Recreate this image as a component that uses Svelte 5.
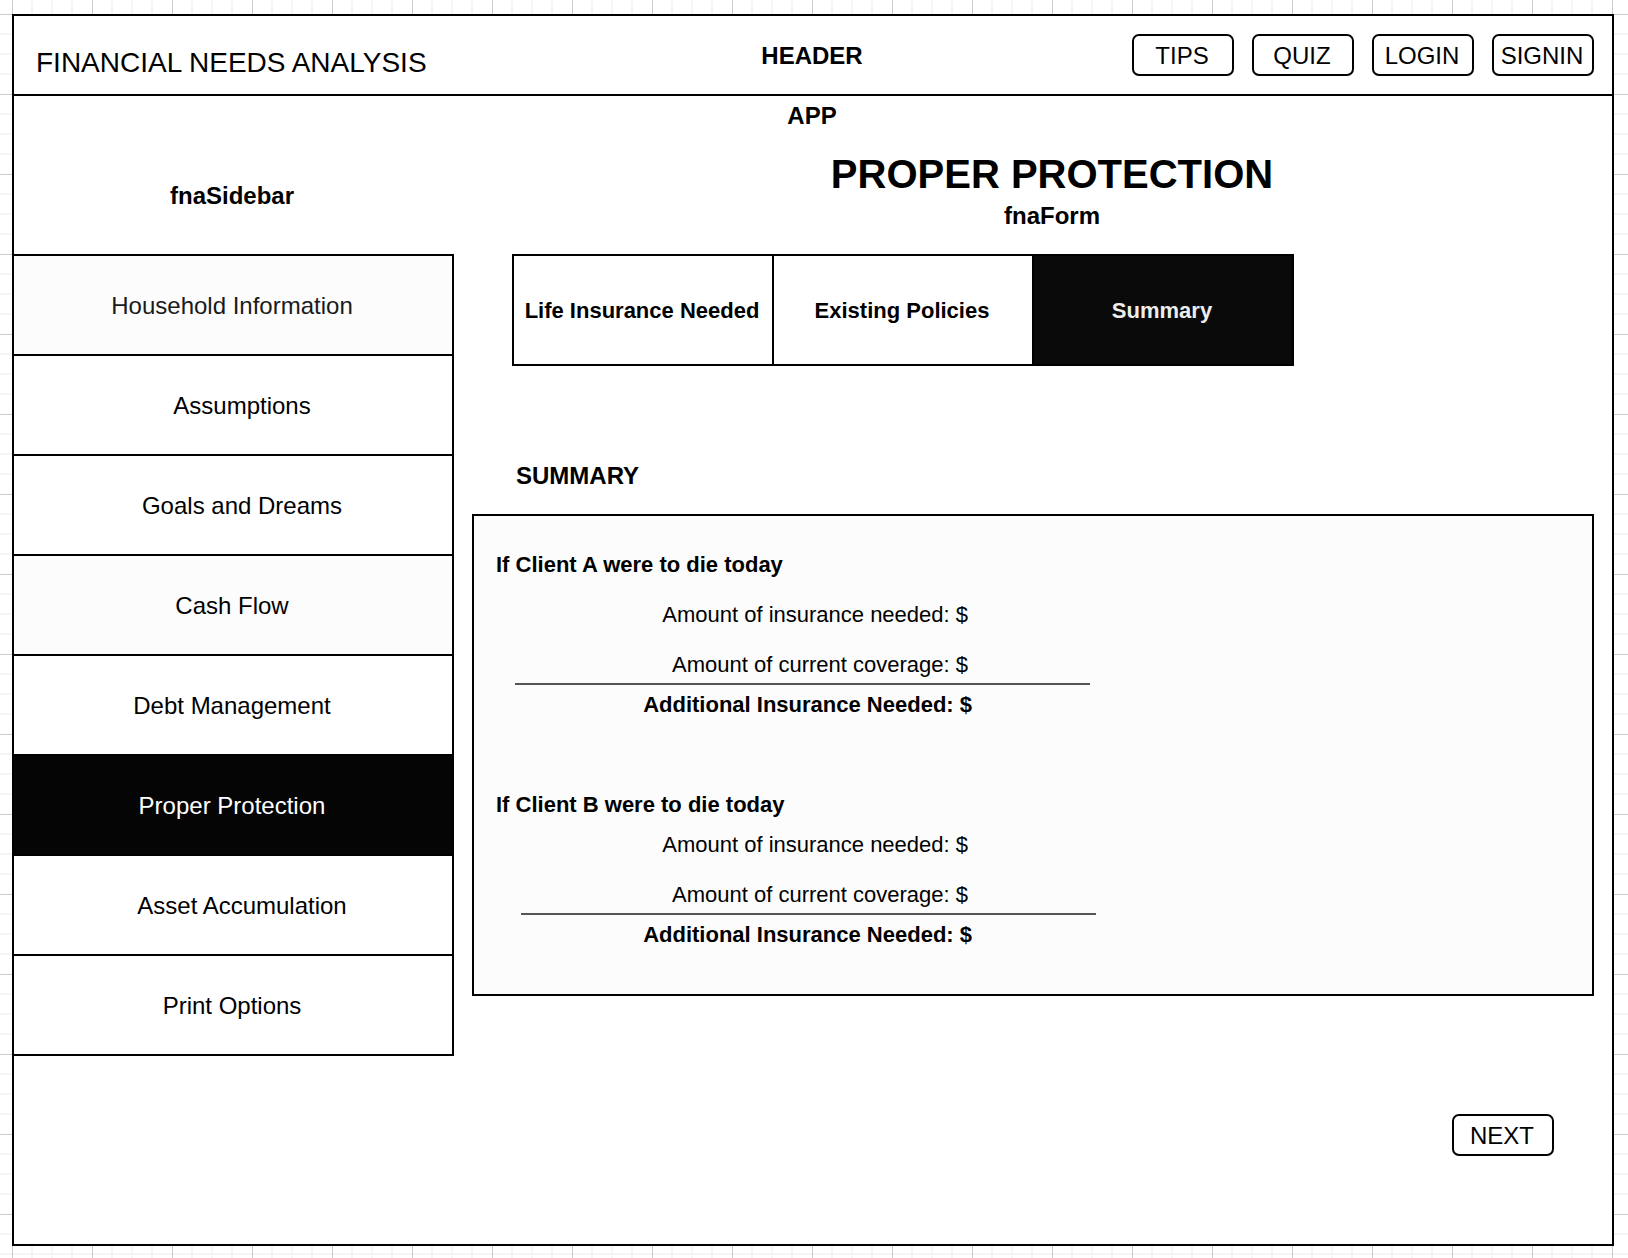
<script>
  const actions = ['TIPS', 'QUIZ', 'LOGIN', 'SIGNIN'];

  const steps = [
    { name: 'Household Information', shaded: true, muted: true },
    { name: 'Assumptions', indented: true },
    { name: 'Goals and Dreams', indented: true },
    { name: 'Cash Flow', shaded: true },
    { name: 'Debt Management' },
    { name: 'Proper Protection', current: true },
    { name: 'Asset Accumulation', indented: true },
    { name: 'Print Options' }
  ];

  const tabs = ['Life Insurance Needed', 'Existing Policies', 'Summary'];
  let activeTab = $state('Summary');

  const clients = ['A', 'B'];
</script>

<div class="canvas">
  <div class="app">
    <header>
      <h1>FINANCIAL NEEDS ANALYSIS</h1>
      <strong>HEADER</strong>
      <div class="actions">
        {#each actions as action}
          <button class="pill" type="button">{action}</button>
        {/each}
      </div>
    </header>

    <p class="app-label">APP</p>

    <div class="columns">
      <aside>
        <p class="sidebar-label">fnaSidebar</p>
        <nav aria-label="Sections">
          {#each steps as step}
            <a
              href="#step"
              class:shaded={step.shaded}
              class:muted={step.muted}
              class:indented={step.indented}
              class:current={step.current}
              aria-current={step.current ? 'page' : undefined}>{step.name}</a
            >
          {/each}
        </nav>
      </aside>

      <main>
        <div class="heading">
          <h2>PROPER PROTECTION</h2>
          <p>fnaForm</p>
        </div>

        <div class="tabs" role="tablist">
          {#each tabs as tab}
            <button
              type="button"
              role="tab"
              aria-selected={activeTab === tab}
              class:active={activeTab === tab}
              onclick={() => (activeTab = tab)}>{tab}</button
            >
          {/each}
        </div>

        <h3>SUMMARY</h3>

        <div class="panel">
          {#each clients as client}
            <section class="client">
              <h4>If Client {client} were to die today</h4>
              <p class="amount">Amount of insurance needed: $</p>
              <p class="amount coverage">Amount of current coverage: $</p>
              <hr />
              <p class="amount total">Additional Insurance Needed: $</p>
            </section>
          {/each}
        </div>

        <div class="footer">
          <button class="pill" type="button">NEXT</button>
        </div>
      </main>
    </div>
  </div>
</div>

<style>
  :global(body) {
    margin: 0;
    background: #fff;
  }

  .canvas {
    box-sizing: border-box;
    min-height: 100vh;
    padding: 14px 14px 12px 12px;
    font-family: Helvetica, 'Liberation Sans', Arial, sans-serif;
    font-size: 24px;
    line-height: 28px;
    color: #000;
    background-color: #fff;
    background-image:
      linear-gradient(to right, #ccc 1px, transparent 1px),
      linear-gradient(to bottom, #ccc 1px, transparent 1px),
      linear-gradient(
        to right,
        transparent 19px, #f5f5f5 19px 21px,
        transparent 21px 39px, #f5f5f5 39px 41px,
        transparent 41px 59px, #f5f5f5 59px 61px,
        transparent 61px
      ),
      linear-gradient(
        to bottom,
        transparent 19px, #f5f5f5 19px 21px,
        transparent 21px 39px, #f5f5f5 39px 41px,
        transparent 41px 59px, #f5f5f5 59px 61px,
        transparent 61px
      );
    background-size: 80px 80px;
    background-position: 12px 14px;
  }

  h1,
  h2,
  h3,
  h4,
  p {
    margin: 0;
  }

  button {
    font: inherit;
    color: inherit;
    background: #fff;
    cursor: pointer;
  }

  .app {
    border: 2px solid #000;
    background: #fff;
  }

  header {
    display: grid;
    grid-template-columns: 1fr auto 1fr;
    align-items: center;
    height: 78px;
    padding: 0 18px;
    border-bottom: 2px solid #000;
  }

  h1 {
    padding: 16px 0 0 4px;
    font-size: 28px;
    font-weight: 400;
  }

  header strong {
    padding: 2px 2px 0 0;
  }

  .actions {
    display: flex;
    justify-content: flex-end;
    gap: 18px;
  }

  .pill {
    width: 102px;
    height: 42px;
    padding: 2px 2px 0 0;
    border: 2px solid #000;
    border-radius: 7px;
  }

  .app-label {
    padding-right: 2px;
    line-height: 40px;
    font-weight: 700;
    text-align: center;
  }

  .columns {
    display: flex;
    align-items: flex-start;
  }

  aside {
    flex: 0 0 440px;
  }

  .sidebar-label {
    padding: 46px 4px 44px 0;
    font-weight: 700;
    text-align: center;
  }

  nav {
    border: solid #000;
    border-width: 2px 2px 0 0;
  }

  nav a {
    display: flex;
    align-items: center;
    justify-content: center;
    height: 96px;
    padding: 2px 2px 0 0;
    border-bottom: 2px solid #000;
    color: #000;
    text-decoration: none;
  }

  nav a.shaded {
    background: #fcfcfc;
  }

  nav a.muted {
    color: #1a1a1a;
  }

  nav a.indented {
    padding: 2px 0 0 18px;
  }

  nav a.current {
    background: #050505;
    color: #fff;
  }

  main {
    flex: 1;
    min-width: 0;
    padding: 14px 18px 88px;
  }

  .heading {
    margin: 0 -18px 20px 20px;
    font-weight: 700;
    text-align: center;
  }

  h2 {
    font-size: 40px;
    line-height: 48px;
  }

  .heading p {
    line-height: 36px;
  }

  .tabs {
    display: grid;
    grid-template-columns: repeat(3, 260px);
    width: max-content;
    margin-left: 40px;
    border-left: 2px solid #000;
  }

  .tabs button {
    height: 112px;
    padding: 2px 2px 0 0;
    border: solid #000;
    border-width: 2px 2px 2px 0;
    font-size: 22px;
    font-weight: 700;
  }

  .tabs .active {
    background: #0a0a0a;
    color: #ededed;
  }

  h3 {
    margin: 96px 0 24px 44px;
    font-size: 24px;
  }

  .panel {
    display: flex;
    flex-direction: column;
    gap: 72px;
    padding: 35px 22px 45px;
    border: 2px solid #000;
    background: #fcfcfc;
    font-size: 22px;
  }

  h4 {
    margin-bottom: 22px;
    font-size: 22px;
  }

  .client + .client h4 {
    margin-bottom: 12px;
  }

  .amount {
    width: 472px;
    text-align: right;
  }

  .coverage {
    margin-top: 22px;
  }

  .total {
    width: 476px;
    font-weight: 700;
  }

  hr {
    width: 575px;
    height: 2px;
    margin: 4px 0 6px 19px;
    border: 0;
    background: #555;
  }

  .client + .client hr {
    margin-left: 25px;
  }

  .footer {
    display: flex;
    justify-content: flex-end;
    padding: 118px 40px 0 0;
  }
</style>
